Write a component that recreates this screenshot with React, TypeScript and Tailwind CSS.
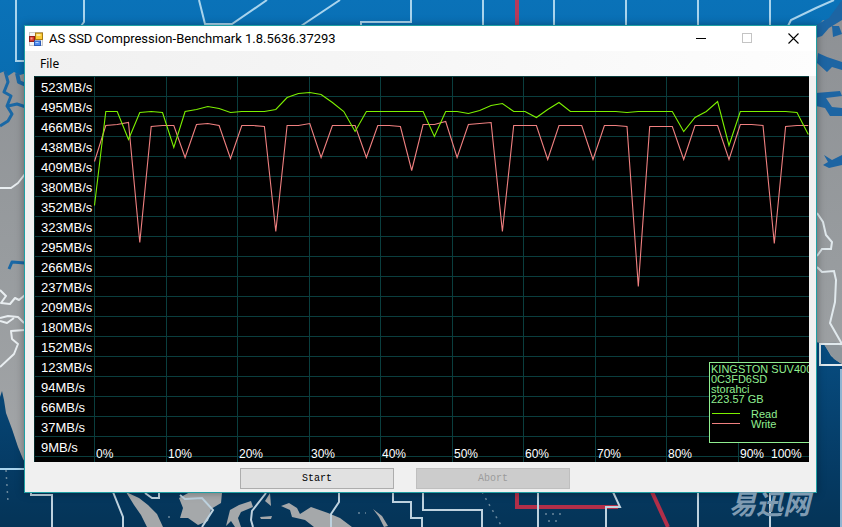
import React from "react";

const SPEEDS = [523, 495, 466, 438, 409, 380, 352, 323, 295, 266, 237, 209, 180, 152, 123, 94, 66, 37, 9];

const PERCENTS: [string, number][] = [
  ["0%", 62], ["10%", 134], ["20%", 205], ["30%", 277], ["40%", 348], ["50%", 420],
  ["60%", 491], ["70%", 563], ["80%", 634], ["90%", 706], ["100%", 737],
];

const GRID_X = [60, 132, 203, 275, 346, 418, 489, 561, 632, 704];

// Heights of the samples below the top of the plot
const READ = [
  129, 35, 35, 63, 36, 35, 36, 71, 35, 33, 30, 32, 36, 35, 35, 35, 33, 21, 17, 16, 18, 26, 35, 55,
  35, 35, 35, 35, 35, 35, 60, 35, 35, 37, 34, 29, 27, 35, 35, 41, 33, 26, 35, 35, 35, 35, 35, 36,
  35, 35, 35, 35, 55, 41, 35, 25, 69, 35, 35, 35, 35, 35, 36, 58,
];
const WRITE = [
  85, 49, 48, 46, 166, 50, 49, 49, 81, 48, 47, 49, 82, 49, 49, 50, 155, 49, 49, 47, 81, 49, 49, 49,
  81, 49, 49, 50, 94, 48, 48, 45, 81, 48, 47, 46, 155, 49, 49, 49, 83, 49, 49, 49, 83, 49, 49, 50,
  210, 50, 50, 50, 83, 49, 49, 49, 83, 48, 48, 49, 167, 50, 49, 49,
];

const STEP = 11.33;
const toPoints = (values: number[]) =>
  values.map((v, i) => `${(60.5 + i * STEP).toFixed(1)},${v + 0.5}`).join(" ");

function Wallpaper() {
  return (
    <svg
      className="absolute inset-0 h-full w-full"
      viewBox="0 0 842 527"
      preserveAspectRatio="xMidYMid slice"
      aria-hidden="true"
    >
      <defs>
        <linearGradient id="sea" gradientUnits="userSpaceOnUse" x1="0" y1="0" x2="0" y2="527">
          <stop offset="0" stopColor="#0a72b8" />
          <stop offset="0.2" stopColor="#086bae" />
          <stop offset="0.7" stopColor="#07497b" />
          <stop offset="0.9" stopColor="#053a63" />
          <stop offset="1" stopColor="#053457" />
        </linearGradient>
        <linearGradient id="land" gradientUnits="userSpaceOnUse" x1="0" y1="0" x2="0" y2="527">
          <stop offset="0" stopColor="#8d9094" />
          <stop offset="0.5" stopColor="#989c9f" />
          <stop offset="1" stopColor="#a6a8aa" />
        </linearGradient>
      </defs>
      <rect width="842" height="527" fill="url(#sea)" />

      {/* western land mass */}
      <path d="M0 73 L5 71 L8 76 L14 72 L20 75 L30 72 V470 L23 459 L18 447 L12 429 L6 413 L4 400 L2 391 L0 397 Z" fill="url(#land)" />
      <g fill="none" stroke="#1a68a5" strokeWidth="3" strokeLinejoin="round">
        <path d="M5 71 L8 82 L4 92 L11 96 L7 106 L12 114 L8 121 L0 126" />
        <path d="M8 106 L17 104 L26 107" />
        <path d="M17 73 L19 82 L26 85" strokeWidth="4" />
        <path d="M9 269 L12 262 L25 263" />
      </g>
      <g fill="none" stroke="#e9eef1" strokeWidth="2" strokeLinejoin="round">
        <path d="M0 188 L11 188 L18 183 L25 174" />
        <path d="M0 290 L6 296 L1 303 L10 304 L15 298 L19 300 L25 295" />
        <path d="M0 318 L8 316 L18 317 L24 323" />
        <path d="M0 321 L7 323 L14 318" />
        <path d="M25 330 L11 331 L12 339 L18 344 L14 354 L0 367" />
      </g>

      {/* eastern land mass */}
      <path d="M816 28 L823 20 L831 24 L842 14 V364 L827 356 L816 342 Z" fill="url(#land)" />
      <g fill="#1d65a3">
        <path d="M816 25 L829 18 L842 0 V20 L829 28 L822 36 L816 38 Z" />
        <path d="M818 53 L827 57 L842 62 V70 L832 67 L827 72 L817 63 Z" />
        <path d="M816 93 L840 91 L842 96 L826 98 L832 107 L842 108 V116 L830 116 L825 108 L816 106 Z" />
        <path d="M824 155 L832 160 L842 155 V165 L829 168 L823 165 L828 162 Z" />
        <path d="M832 26 L839 26 L842 34 L833 37 Z" />
      </g>
      <path d="M816 342 L824 344 L831 356 L842 365 V527 H816 Z" fill="url(#sea)" />
      <path d="M823 343 L836 342 L842 348 V364 L834 359 Z" fill="#8f969b" />
      <path d="M840 369 H842 V527 H840 Z" fill="#8fb4d1" />
      <g fill="none" stroke="#e1e9ed" strokeWidth="2">
        <path d="M817 213 L823 222 L826 235 L832 242 L831 249 L822 249 L817 256" />
        <path d="M817 267 L822 272 L834 271 L836 280 L835 302 L830 323 L842 344 H820 V365 H842" />
      </g>

      {/* southern islands */}
      <g fill="#a5a8aa">
        <path d="M126 492 L139 498 L148 505 L157 514 L163 527 H147 L141 515 L134 505 Z" />
        <path d="M179 498 L190 492 L222 493 L221 503 L211 509 L208 521 L198 525 L188 518 L180 518 L183 508 Z" />
        <path d="M230 510 L239 505 L251 501 L253 507 L241 512 L238 518 L241 527 H235 L231 521 L226 526 Z" />
        <path d="M281 506 L289 503 L297 508 L300 514 L311 507 L328 513 L340 518 L352 527 H314 L305 520 L292 517 L290 510 Z" />
        <path d="M265 501 L270 493 L271 506 Z" />
        <path d="M260 517 L272 516 L271 519 L261 519 Z" />
        <path d="M373 509 L382 516 L388 526 L384 527 L379 517 Z" />
      </g>
      <g stroke="#69879c" strokeWidth="1.5" strokeDasharray="2 5" fill="none">
        <path d="M6 470 L8 502" />
        <path d="M482 492 L502 527" />
        <path d="M545 514 H562 M548 521 H560" />
        <path d="M358 513 H366 M168 517 H175" />
      </g>

      {/* region outlines */}
      <g fill="none" stroke="#a9d4ed" strokeWidth="2">
        <path d="M16 0 V61 H25 M84 0 V22 L81 26" />
        <path d="M199 0 L205 24 H232 L267 0 M301 26 L340 0" />
        <path d="M361 26 V22 H411 V0" />
        <path d="M483 0 V26 M554 0 V26 M626 0 V26 M698 0 V26 M770 0 V26" />
        <path d="M788 26 L791 20 L816 8 L834 0" />
        <path d="M0 469 H25" />
      </g>
      <path d="M517 0 V26" stroke="#b73a5a" strokeWidth="4" />
      <path d="M517 492 V507 H618" fill="none" stroke="#b22f49" strokeWidth="4" />
      <path d="M652 492 L668 527" fill="none" stroke="#b22f49" strokeWidth="4" />
      <g fill="none" stroke="#bed2df" strokeWidth="2">
        <path d="M31 492 V495 H52 V527" />
        <path d="M113 492 L123 517 V527" />
        <path d="M145 493 L152 498 H159 V493" />
        <path d="M180 495 L185 499 L202 498 L213 510 L202 527" />
        <path d="M266 493 L252 511 L251 520 L253 527" />
        <path d="M339 492 V502 L331 514 V527" />
        <path d="M393 492 V502 H411 V518 H422 V527" />
        <path d="M423 492 V510 H482 V527" />
        <path d="M538 492 V527 M613 492 L620 507 H606 V527 M698 492 V527 M770 492 V527" />
      </g>
    </svg>
  );
}

function AppIcon() {
  return (
    <svg className="h-[14px] w-[14px]" viewBox="0 0 14 14" aria-hidden="true">
      <rect x="0.5" y="0.5" width="13" height="13" fill="#f4f4f4" stroke="#c9c9c9" />
      <rect x="6.5" y="1" width="7" height="6.5" fill="#fbc934" stroke="#a97b12" />
      <rect x="7.5" y="2" width="4" height="2" fill="#fee99a" />
      <rect x="0.5" y="4.5" width="5" height="5" fill="#d83a2c" stroke="#961d18" />
      <rect x="1.5" y="5.5" width="2" height="2" fill="#f39a8c" />
      <rect x="5.5" y="9" width="6" height="4.5" fill="#4f8df0" stroke="#2c5cb8" />
      <rect x="6.5" y="10" width="3" height="1" fill="#b5d2ff" />
    </svg>
  );
}

function TitleBar() {
  return (
    <header className="flex h-[25px] items-center bg-white">
      <div className="flex min-w-0 flex-1 items-center gap-1.5 pl-1">
        <AppIcon />
        <h1 className="truncate font-[Roboto,sans-serif] text-[13px] leading-4 text-black">AS SSD Compression-Benchmark 1.8.5636.37293</h1>
      </div>
      <button type="button" aria-label="Minimize" className="flex h-full w-[46px] items-center justify-center">
        <svg className="h-[11px] w-[11px]" viewBox="0 0 11 11" shapeRendering="crispEdges">
          <path d="M0 5.5 H10" stroke="#000" />
        </svg>
      </button>
      <button type="button" aria-label="Maximize" disabled className="flex h-full w-[46px] items-center justify-center">
        <svg className="h-[11px] w-[11px]" viewBox="0 0 11 11" shapeRendering="crispEdges">
          <rect x="0.5" y="0.5" width="9" height="9" fill="none" stroke="#c4c4c4" />
        </svg>
      </button>
      <button type="button" aria-label="Close" className="flex h-full w-[46px] items-center justify-center">
        <svg className="h-[11px] w-[11px]" viewBox="0 0 11 11">
          <path d="M0.5 0.5 L10.5 10.5 M10.5 0.5 L0.5 10.5" stroke="#000" strokeWidth="1.1" />
        </svg>
      </button>
    </header>
  );
}

function Legend() {
  return (
    <g>
      <rect x="675.5" y="286.5" width="110" height="80" fill="#000" stroke="#90ee90" />
      <g fill="#90ee90" fontSize="11">
        <text x="677" y="297">KINGSTON SUV400</text>
        <text x="677" y="307">0C3FD6SD</text>
        <text x="677" y="317">storahci</text>
        <text x="677" y="327">223.57 GB</text>
        <text x="717" y="342">Read</text>
        <text x="717" y="352">Write</text>
      </g>
      <rect x="678" y="337" width="28" height="1" fill="#7cf000" />
      <rect x="678" y="347" width="28" height="1" fill="#f08080" />
    </g>
  );
}

function Chart() {
  return (
    <svg
      className="block h-auto w-full bg-black font-['Liberation_Sans',Arial,sans-serif]"
      viewBox="0 0 775 386"
      role="img"
      aria-label="Read and write speed by compressibility"
    >
      <g stroke="#0a3e3e" shapeRendering="crispEdges">
        {Array.from({ length: 20 }, (_, i) => (
          <path key={i} d={`M0 ${i * 20 + 0.5} H775`} />
        ))}
        {GRID_X.map((x) => (
          <path key={x} d={`M${x + 0.5} 0 V386`} />
        ))}
        <path d="M0.5 0 V386" stroke="#062a2a" />
      </g>
      <g fill="#fff" fontSize="13">
        {SPEEDS.map((s, i) => (
          <text key={s} x="7" y={16 + i * 20}>{`${s}MB/s`}</text>
        ))}
      </g>
      <g fill="#fff" fontSize="12">
        {PERCENTS.map(([label, x]) => (
          <text key={label} x={x} y="382">{label}</text>
        ))}
      </g>
      <polyline points={toPoints(WRITE)} fill="none" stroke="#f08080" strokeWidth="1.1" />
      <polyline points={toPoints(READ)} fill="none" stroke="#7cf000" strokeWidth="1.1" />
      <Legend />
    </svg>
  );
}

export default function App() {
  return (
    <main className="relative min-h-screen overflow-hidden bg-[#07497b] pt-[25px] pr-[25px] pl-6 font-['Noto_Sans','Noto_Sans_CJK_SC',sans-serif]">
      <Wallpaper />
      <section className="relative border border-[#1f9fa3] bg-[#f0f0f0] shadow-[0_0_8px_rgba(0,0,0,0.35)]">
        <TitleBar />
        <nav className="flex h-[25px] items-center bg-linear-to-r from-[#f0f0f0] to-[#fdfdfd] pl-[15px]">
          <button type="button" className="text-[12px] leading-4 text-black">File</button>
        </nav>
        <div className="pr-[7px] pl-[9px]">
          <Chart />
        </div>
        <footer className="flex h-[30px] items-start gap-[22px] pt-1.5 pl-[215px] font-['Liberation_Mono','Courier_New',monospace] text-[10px]">
          <button type="button" className="h-[21px] w-[154px] border border-[#adadad] bg-[#e1e1e1] text-black">Start</button>
          <button type="button" disabled className="h-[21px] w-[154px] border border-[#bfbfbf] bg-[#cccccc] text-[#9b9b9b]">Abort</button>
        </footer>
      </section>
      <span className="absolute right-8 bottom-2 font-['Noto_Sans_CJK_SC',sans-serif] text-[27px] leading-8 font-bold text-[#7f9bb2] italic">易迅网</span>
    </main>
  );
}
